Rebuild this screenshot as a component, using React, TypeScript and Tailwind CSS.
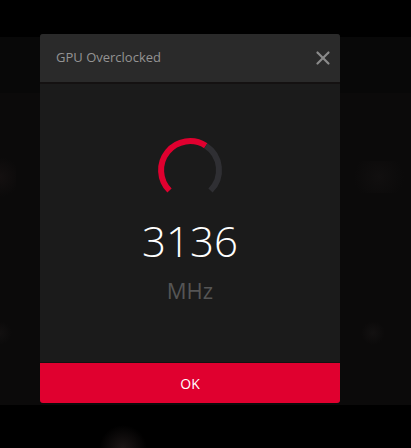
import { X } from 'lucide-react'

// Gauge: 270° track from SW to SE, red fill up to ~62%
function ClockGauge() {
  return (
    <svg width="70" height="70" viewBox="0 0 70 70" className="block">
      <path
        d="M14.5 55.5 A29 29 0 0 1 50.8 10.7"
        fill="none"
        stroke="#e0002f"
        strokeWidth={6}
      />
      <path
        d="M50.8 10.7 A29 29 0 0 1 55.5 55.5"
        fill="none"
        stroke="#2f2f33"
        strokeWidth={6}
      />
    </svg>
  )
}

export default function App() {
  return (
    <div
      className="relative h-[448px] w-full overflow-hidden bg-black"
      style={{ fontFamily: '"Open Sans", "Noto Sans", sans-serif' }}
    >
      {/* background app behind the modal */}
      <div className="h-[37px] bg-black" />
      <div className="h-[56px] bg-[#080808]" />
      <div className="flex h-[312px] flex-col justify-around bg-[#0b0a0a]">
        <div className="flex items-center justify-between">
          <div className="h-12 w-8 -ml-4 rounded-full bg-[radial-gradient(circle,#141010_0%,transparent_70%)]" />
          <div className="h-8 w-16 rounded-full bg-[radial-gradient(circle,#110f0f_0%,transparent_70%)]" />
        </div>
        <div className="flex items-center justify-between">
          <div className="h-6 w-6 -ml-3 rounded-full bg-[radial-gradient(circle,#121010_0%,transparent_70%)]" />
          <div className="mr-[26px] h-6 w-6 rounded-full bg-[radial-gradient(circle,#131111_0%,transparent_70%)]" />
        </div>
      </div>
      <div className="flex h-[43px] bg-black pl-[95px]">
        <div className="mt-5 h-12 w-14 rounded-full bg-[radial-gradient(circle,#1d1717_0%,transparent_65%)]" />
      </div>

      {/* modal */}
      <div className="absolute left-[40px] top-[34px] flex h-[369px] w-[300px] flex-col overflow-hidden rounded-[3px] bg-[#1b1b1b]">
        <div className="flex h-[48px] items-center justify-between bg-[#2a2a2a] pl-[16px] pr-[6px]">
          <span className="text-[13px] text-[#949494]">GPU Overclocked</span>
          <X className="h-[22px] w-[22px] text-[#8a8a8a]" strokeWidth={2.4} />
        </div>
        <div className="h-[2px] bg-[#141111]" />
        <div className="flex flex-1 flex-col items-center pt-[51px]">
          <ClockGauge />
          <div className="mt-[15px] text-[42px] font-light leading-none text-white">3136</div>
          <div className="mt-[17px] text-[22px] leading-none text-[#555555]">MHz</div>
        </div>
        <div className="h-px bg-[#141111]" />
        <button className="h-[40px] w-full bg-[#e0002f] text-[14px] text-white">OK</button>
      </div>
    </div>
  )
}
